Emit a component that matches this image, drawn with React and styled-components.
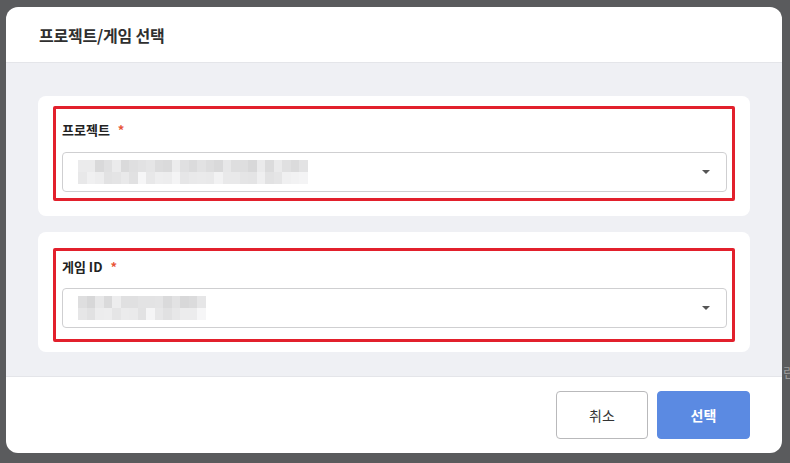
import React from "react";
import styled, { createGlobalStyle } from "styled-components";

const Global = createGlobalStyle`
  html, body { margin: 0; padding: 0; }
  body {
    background: #5a5b5d;
    font-family: "Noto Sans CJK KR", "Noto Sans", sans-serif;
    width: 790px;
    height: 463px;
    overflow: hidden;
  }
`;

const Overlay = styled.div`
  position: relative;
  width: 790px;
  height: 463px;
  box-sizing: border-box;
  padding: 7px 8px 10px 6px;
`;

const EdgeText = styled.span`
  position: absolute;
  left: 783px;
  top: 362px;
  font-size: 13px;
  color: #9a9a9a;
`;

const Modal = styled.div`
  width: 776px;
  height: 446px;
  background: #fff;
  border-radius: 12px;
  overflow: hidden;
  display: flex;
  flex-direction: column;
`;

const Header = styled.div`
  height: 56px;
  box-sizing: border-box;
  border-bottom: 1px solid #e4e5e9;
  display: flex;
  align-items: center;
  padding: 0 33px;
`;

const Title = styled.h2`
  margin: 0;
  font-size: 16px;
  font-weight: 700;
  color: #2f2f2f;
  letter-spacing: -0.2px;
`;

const Body = styled.div`
  background: #eff0f4;
  padding: 33px 32px 24px 32px;
  display: flex;
  flex-direction: column;
  gap: 16px;
`;

const Card = styled.div`
  background: #fff;
  border-radius: 8px;
  padding: ${(p) => p.$pad};
`;

const Field = styled.div`
  border: 3px solid #e2202c;
  border-radius: 2px;
  padding: ${(p) => p.$pad};
`;

const Label = styled.div`
  font-size: 13px;
  font-weight: 700;
  color: #222;
  line-height: 20px;
  margin-bottom: ${(p) => p.$gap}px;
  display: flex;
  align-items: center;
`;

const Star = styled.span`
  color: #e8553a;
  margin-left: 8px;
  font-size: 13px;
`;

const Select = styled.div`
  height: 40px;
  box-sizing: border-box;
  border: 1px solid #cfcfd1;
  border-radius: 4px;
  display: flex;
  align-items: center;
  padding: 0 16px 0 15px;
`;

const Mosaic = styled.div`
  display: grid;
  grid-template-columns: repeat(${(p) => p.$cols}, ${(p) => p.$cw}px);
  grid-auto-rows: 12px;
  flex: none;
`;

const Cell = styled.div`
  background: ${(p) => p.$c};
`;

const Arrow = styled.div`
  margin-left: auto;
  width: 0;
  height: 0;
  border-left: 4px solid transparent;
  border-right: 4px solid transparent;
  border-top: 4px solid #555;
`;

const Footer = styled.div`
  flex: 1;
  border-top: 1px solid #e4e5e9;
  display: flex;
  justify-content: flex-end;
  align-items: flex-start;
  gap: 9px;
  padding: 14px 32px 0 0;
`;

const Button = styled.button`
  width: ${(p) => p.$w}px;
  height: 48px;
  border-radius: 4px;
  font-family: "Noto Sans CJK KR", "Noto Sans", sans-serif;
  font-size: 14px;
  cursor: pointer;
  border: 1px solid ${(p) => (p.$primary ? "#5b8ae2" : "#b9b9bb")};
  background: ${(p) => (p.$primary ? "#5b8ae2" : "#fff")};
  color: ${(p) => (p.$primary ? "#fff" : "#333")};
  font-weight: ${(p) => (p.$primary ? 700 : 400)};
`;

function makeCells(cols, seed) {
  let s = seed;
  const rnd = () => {
    s = (s * 9301 + 49297) % 233280;
    return s / 233280;
  };
  const out = [];
  for (let r = 0; r < 2; r++) {
    for (let c = 0; c < cols; c++) {
      const base = r === 0 ? 224 : 233;
      const v = Math.round(base + (rnd() - 0.4) * 22);
      const g = Math.max(205, Math.min(246, v));
      out.push(`rgb(${g},${g},${g + 1})`);
    }
  }
  return out;
}

function Blurred({ cols, seed }) {
  const cells = makeCells(cols, seed);
  return (
    <Mosaic $cols={cols} $cw={8.5}>
      {cells.map((c, i) => (
        <Cell key={i} $c={c} />
      ))}
    </Mosaic>
  );
}

export default function App() {
  return (
    <>
      <Global />
      <Overlay>
        <Modal>
          <Header>
            <Title>프로젝트/게임 선택</Title>
          </Header>
          <Body>
            <Card $pad="10px 15px 15px 15px">
              <Field $pad="11px 5px 6px 6px">
                <Label $gap={12}>
                  프로젝트<Star>*</Star>
                </Label>
                <Select>
                  <Blurred cols={27} seed={17} />
                  <Arrow />
                </Select>
              </Field>
            </Card>
            <Card $pad="16px 15px 10px 15px">
              <Field $pad="6px 5px 11px 6px">
                <Label $gap={11}>
                  게임 ID<Star>*</Star>
                </Label>
                <Select>
                  <Blurred cols={15} seed={53} />
                  <Arrow />
                </Select>
              </Field>
            </Card>
          </Body>
          <Footer>
            <Button $w={92}>취소</Button>
            <Button $w={93} $primary>
              선택
            </Button>
          </Footer>
        </Modal>
        <EdgeText>린</EdgeText>
      </Overlay>
    </>
  );
}
